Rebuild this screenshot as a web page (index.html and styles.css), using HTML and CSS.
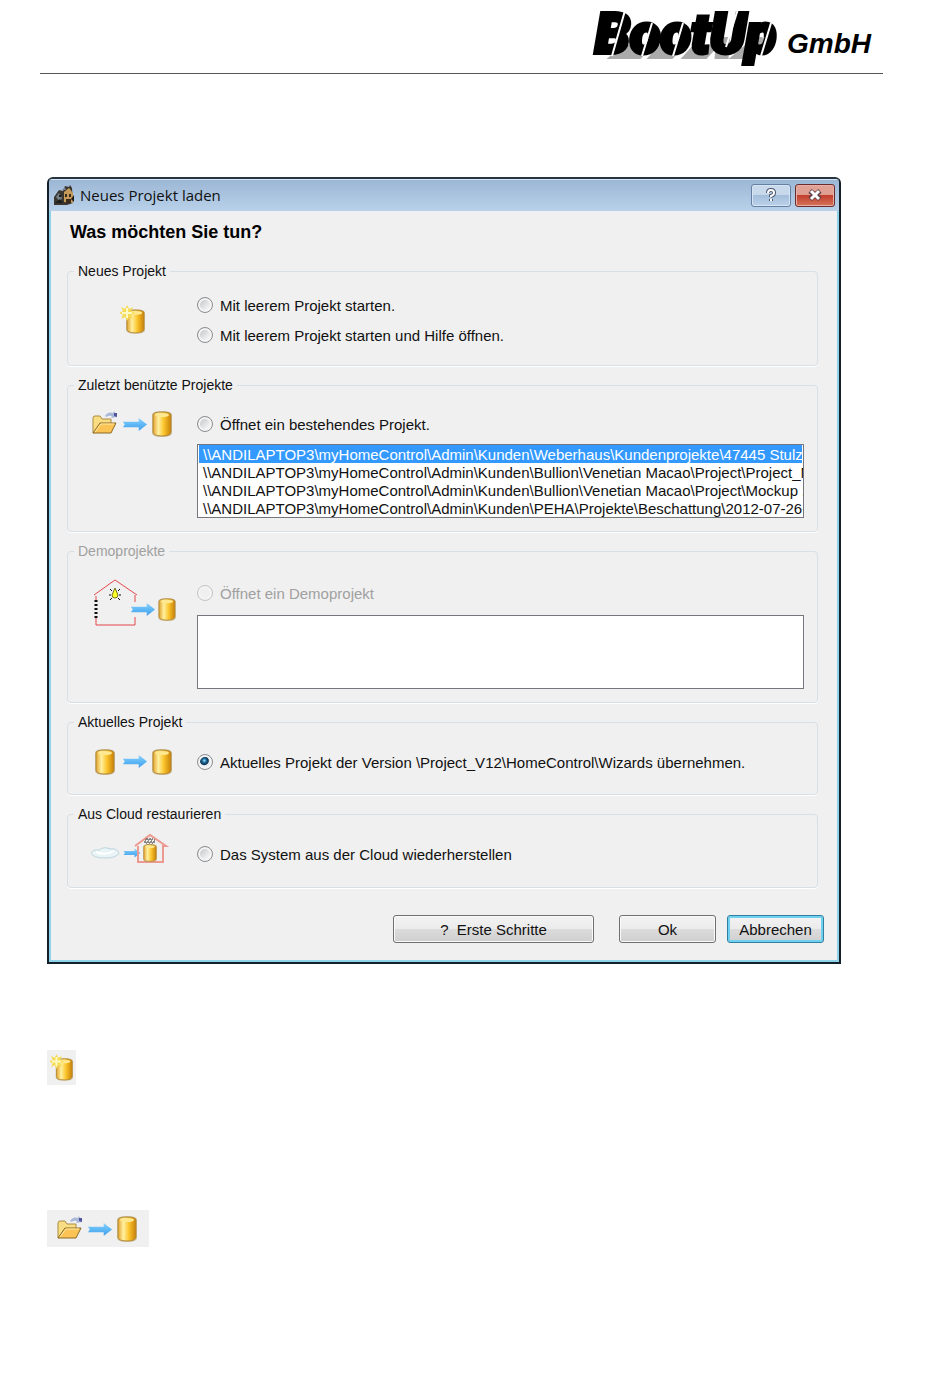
FILE: index.html
```
<!DOCTYPE html>
<html lang="de">
  <head>
    <meta charset="UTF-8" />
    <meta name="viewport" content="width=device-width, initial-scale=1.0" />
    <title>Neues Projekt laden</title>
    <link rel="stylesheet" href="styles.css">
  </head>
  <body>
    <!-- Shared icon parts -->
    <svg class="defs" aria-hidden="true">
      <defs>
        <linearGradient id="gold">
          <stop offset="0" stop-color="#e3a32c" />
          <stop offset="0.3" stop-color="#fff0a0" />
          <stop offset="0.6" stop-color="#fbc52d" />
          <stop offset="1" stop-color="#c98108" />
        </linearGradient>
        <linearGradient id="blue" x2="0" y2="1">
          <stop offset="0" stop-color="#8fd2fb" />
          <stop offset="0.5" stop-color="#5db8f5" />
          <stop offset="1" stop-color="#4a9fe8" />
        </linearGradient>
        <symbol id="barrel" viewBox="0 0 20 26">
          <path d="M0 4q0-4 10-4t10 4v18q0 4-10 4t-10-4z" fill="#b5a277" opacity=".55" />
          <path d="M1 4q0-3 9-3t9 3v17q0 4-9 4t-9-4z" fill="url(#gold)" stroke="#b58a35" />
          <ellipse cx="10" cy="4" rx="7" ry="2" fill="#ffe88f" />
        </symbol>
        <symbol id="arrow" viewBox="0 0 28 14">
          <path d="M1 4l2 3-2 3h17v4l9-7-9-7v4z" fill="url(#blue)" />
        </symbol>
        <symbol id="folder" viewBox="0 0 26 24">
          <path d="M13 5q3-5 8-3l1-2 3 6-6 1 1-2q-4-1-5 1z" fill="#a9b8d8" />
          <path d="M22 2l3 0v4l-3-1z" fill="#53549b" />
          <path d="M1 22V7q0-2 2-2h5l2 3h9v5z" fill="#f9dd83" stroke="#ad8b43" />
          <path d="M1 22l7-10h16l-5 10z" fill="#fbc254" stroke="#8c6a25" />
          <path d="M3 21l6-8h13" fill="none" stroke="#ffeaa5" />
        </symbol>
        <symbol id="new-barrel" viewBox="0 0 26 30">
          <use href="#barrel" x="6" y="4" width="19" height="25" />
          <path d="M7 0l2 4 4-2-2 4 4 2-4 2 2 4-4-2-2 4-2-4-4 2 2-4-4-2 4-2-2-4 4 2z" fill="#f6dc55" />
          <path d="M7 3v10M2 8h10" stroke="#fffac5" stroke-width="2" />
        </symbol>
        <symbol id="open-barrel" viewBox="0 0 84 30">
          <use href="#folder" x="1" y="2" width="26" height="24" />
          <use href="#arrow" x="30" y="9" width="28" height="13" />
          <use href="#barrel" x="61" y="2" width="20" height="26" />
        </symbol>
      </defs>
    </svg>

    <header class="page-header">
      <div class="logo">
        <svg class="logo-word" viewBox="0 0 194 60" role="img" aria-label="BootUp">
          <g transform="translate(16 50) skewX(-32)" aria-hidden="true">
            <path d="M0 4l8-14h30l-4 14zM40 4l4-14h26l-4 14zM74 4l4-14h26l-4 14zM108 4l-12-22h14l12 22zM122 4h20l-4-14h-8zM142-6l-14-12h14l14 14z" fill="#aaa" />
          </g>
          <text class="logo-main" x="2" y="48">BootUp</text>
          <path class="logo-cut" d="M33 2L19 51M59 18L49 51M90 18L80 51M145 4L133 42M178 18L168 51" />
        </svg>
        <span class="logo-suffix">GmbH</span>
      </div>
    </header>

    <main>
      <section class="dialog" aria-labelledby="dialogTitle">
        <div class="title-bar">
          <svg class="app-icon" viewBox="0 0 22 20" aria-hidden="true">
            <path d="M0 12l5-7 4 1 2-5 4 1 1-2 2 3 1 15-6 2H0z" fill="#3c3630" />
            <path d="M10 7l5-4 4 5v10l-9-1z" fill="#c69a58" />
            <path d="M11 9h2v3h-2zM15 9h2v3h-2zM12 14h5v4h-5z" fill="#3b2b1c" />
            <path d="M2 12l3-4 3 5-2 4zM8 5l3-3 1 3z" fill="#75818a" />
            <path d="M1 18l5-4 3 4zM5 10h2v2H5zM17 14l3-4v7z" fill="#1d1d1b" />
          </svg>
          <span class="title" id="dialogTitle">Neues Projekt laden</span>
          <button type="button" class="title-button" aria-label="Hilfe">
            <svg viewBox="0 0 16 16" width="16" height="16"><path d="M5 6q0-3 3-3t3 3q0 2-3 3v1M8 12v2" fill="none" stroke="#4b5669" stroke-width="4" /><path d="M5 6q0-3 3-3t3 3q0 2-3 3v1M8 12v2" fill="none" stroke="#fff" stroke-width="2" /></svg>
          </button>
          <button type="button" class="title-button close" aria-label="Schliessen">
            <svg viewBox="0 0 16 14" width="16" height="14"><path d="M3 3l10 8M13 3L3 11" stroke="#61404a" stroke-width="5" /><path d="M4 3l8 8M12 3l-8 8" stroke="#fff" stroke-width="3" /></svg>
          </button>
        </div>

        <form class="dialog-body">
          <h1>Was möchten Sie tun?</h1>

          <fieldset class="group new-project">
            <legend>Neues Projekt</legend>
            <svg class="icon" width="26" height="30" aria-hidden="true"><use href="#new-barrel" /></svg>
            <div class="options">
              <label class="option"><input type="radio" name="action" value="empty" />Mit leerem Projekt starten.</label>
              <label class="option"><input type="radio" name="action" value="help" />Mit leerem Projekt starten und Hilfe öffnen.</label>
            </div>
          </fieldset>

          <fieldset class="group">
            <legend>Zuletzt benützte Projekte</legend>
            <svg class="icon" width="84" height="30" aria-hidden="true"><use href="#open-barrel" /></svg>
            <div class="options">
              <label class="option"><input type="radio" name="action" value="recent" />Öffnet ein bestehendes Projekt.</label>
              <select class="project-list" size="4" aria-label="Zuletzt benützte Projekte">
                <option selected>\\ANDILAPTOP3\myHomeControl\Admin\Kunden\Weberhaus\Kundenprojekte\47445 Stulz\P</option>
                <option>\\ANDILAPTOP3\myHomeControl\Admin\Kunden\Bullion\Venetian Macao\Project\Project_Ma</option>
                <option>\\ANDILAPTOP3\myHomeControl\Admin\Kunden\Bullion\Venetian Macao\Project\Mockup 2\</option>
                <option>\\ANDILAPTOP3\myHomeControl\Admin\Kunden\PEHA\Projekte\Beschattung\2012-07-26-D</option>
              </select>
            </div>
          </fieldset>

          <fieldset class="group demo" disabled>
            <legend>Demoprojekte</legend>
            <svg class="icon" width="86" height="50" viewBox="0 0 86 50" aria-hidden="true">
              <path d="M4 17L25 2l22 15M45 17v7M45 39v8H6v-8M6 18v5" fill="none" stroke="#e4474b" />
              <path d="M6 22v18" stroke="#111" stroke-width="3" stroke-dasharray="2 2" />
              <path d="M25 10l3 7q0 3-3 3t-3-3z" fill="#ffff2a" stroke="#73731c" />
              <path d="M19 17h2M29 17h2M20 11l2 2M30 11l-2 2M20 22l2-2M30 22l-2-2" stroke="#111" />
              <use href="#arrow" x="40" y="25" width="26" height="13" />
              <use href="#barrel" x="68" y="20" width="18" height="23" />
            </svg>
            <div class="options">
              <label class="option"><input type="radio" name="action" value="demo" />Öffnet ein Demoprojekt</label>
              <select class="project-list" size="4" aria-label="Demoprojekte"></select>
            </div>
          </fieldset>

          <fieldset class="group current">
            <legend>Aktuelles Projekt</legend>
            <svg class="icon" width="84" height="30" viewBox="0 0 84 30" aria-hidden="true">
              <use href="#barrel" x="4" y="2" width="20" height="26" />
              <use href="#arrow" x="30" y="8" width="28" height="13" />
              <use href="#barrel" x="61" y="2" width="20" height="26" />
            </svg>
            <div class="options">
              <label class="option"><input type="radio" name="action" value="current" checked />Aktuelles Projekt der Version \Project_V12\HomeControl\Wizards übernehmen.</label>
            </div>
          </fieldset>

          <fieldset class="group cloud">
            <legend>Aus Cloud restaurieren</legend>
            <svg class="icon" width="84" height="36" viewBox="3 0 84 36" aria-hidden="true">
              <path d="M3 20q2-4 8-3 5-4 11-1 7-1 9 4-2 5-14 5T3 20z" fill="#e9f4f7" stroke="#bdd5dc" />
              <path d="M8 19q9 4 18-1" fill="none" stroke="#fff" stroke-width="2" />
              <use href="#arrow" x="35" y="15" width="18" height="10" />
              <path d="M47 13L62 2l16 11h-3v16H50V13" fill="none" stroke="#ec9a90" stroke-width="2" />
              <path d="M58 6h7M56 9h11M59 12h6" stroke="#28221b" stroke-dasharray="2 1" />
              <path d="M57 7h10M58 10h8" stroke="#28221b" stroke-dasharray="1 2" />
              <use href="#barrel" x="53" y="11" width="18" height="18" preserveAspectRatio="none" />
            </svg>
            <div class="options">
              <label class="option"><input type="radio" name="action" value="cloud" />Das System aus der Cloud wiederherstellen</label>
            </div>
          </fieldset>

          <div class="buttons">
            <button type="button" class="button wide">?&nbsp; Erste Schritte</button>
            <button type="button" class="button">Ok</button>
            <button type="button" class="button default">Abbrechen</button>
          </div>
        </form>
      </section>

      <div class="figure new">
        <svg width="24" height="28" aria-hidden="true"><use href="#new-barrel" /></svg>
      </div>
      <div class="figure open">
        <svg width="84" height="30" aria-hidden="true"><use href="#open-barrel" /></svg>
      </div>
    </main>
  </body>
</html>
```
FILE: styles.css
```
* {
  box-sizing: border-box;
}
body {
  margin: 0;
  padding: 0 67px 140px 40px;
  background: white;
  color: #111;
  font-family: "Liberation Sans", Arial, sans-serif;
  font-size: 15px;
}
.defs {
  display: block;
  width: 0;
  height: 0;
}

/* Page header */
.page-header {
  height: 74px;
  border-bottom: 1px solid #555;
}
.logo {
  display: flex;
  justify-content: flex-end;
  align-items: flex-start;
  padding: 5px 12px 0 0;
}
.logo-word {
  width: 194px;
  height: 60px;
  overflow: visible;
}
.logo-main {
  fill: black;
  stroke: black;
  stroke-width: 4px;
  font-family: Roboto, "Liberation Sans", sans-serif;
  font-size: 56px;
  font-weight: 900;
  font-style: italic;
}
.logo-cut {
  fill: none;
  stroke: white;
  stroke-width: 2px;
}
.logo-suffix {
  margin-top: 23px;
  color: black;
  font-size: 28px;
  font-weight: bold;
  font-style: italic;
  line-height: 32px;
}

/* Dialog */
.dialog {
  margin: 103px 42px 0 7px;
  border: 2px solid #14202a;
  border-top-color: #27343b;
  border-radius: 6px 6px 0 0;
  background: #f0f0f0;
  box-shadow: inset 0 0 0 2px #8fd3ea;
  overflow: hidden;
}
.title-bar {
  display: flex;
  align-items: center;
  gap: 4px;
  height: 32px;
  padding: 0 4px 0 5px;
  background: linear-gradient(#9bb6d4, #b9d1ea);
  box-shadow: inset 0 1px #d4e5f5;
}
.app-icon {
  width: 22px;
  height: 20px;
}
.title {
  flex: 1;
  font-family: "Open Sans", "Noto Sans", sans-serif;
  font-size: 15px;
}
.title-button {
  display: flex;
  align-items: center;
  justify-content: center;
  width: 40px;
  height: 23px;
  padding: 0;
  border: 1px solid #6580a3;
  border-radius: 3px;
  background: linear-gradient(#c8d9ec 45%, #a4bedb 50%, #bbd2ea);
  box-shadow: inset 0 0 0 1px #d6e5f4;
}
.title-button.close {
  border-color: #6b2b2c;
  background: linear-gradient(#e0a094 45%, #c2402d 50%, #d4735b);
  box-shadow: inset 0 0 0 1px #e7afa5;
}
.dialog-body {
  padding: 10px 21px 19px 18px;
}
h1 {
  margin: 0 0 19px 3px;
  font-size: 18px;
  line-height: 22px;
  color: black;
}

/* Option groups */
.group {
  display: grid;
  grid-template-columns: 129px 1fr;
  min-width: 0;
  margin: 0 0 10px;
  padding: 15px 13px 13px 0;
  border: 1px solid #d8dfe5;
  border-radius: 4px;
  box-shadow: 0 1px white;
}
.group legend {
  margin-left: 6px;
  padding: 0 4px;
  font-size: 14px;
  line-height: 18px;
}
.icon {
  justify-self: center;
}
.options {
  min-width: 0;
}
.new-project {
  align-items: center;
  padding-top: 10px;
  padding-bottom: 15px;
}
.demo {
  padding-top: 18px;
  color: #a0a0a0;
}
.current {
  padding-top: 16px;
  padding-bottom: 17px;
}
.cloud {
  align-items: end;
  padding-top: 10px;
  padding-bottom: 18px;
}
.option {
  display: flex;
  align-items: center;
  gap: 7px;
  height: 30px;
}
.option input {
  flex: none;
  appearance: none;
  width: 16px;
  height: 16px;
  margin: 0;
  border: 1px solid #8b8d90;
  border-radius: 50%;
  background: linear-gradient(135deg, #b9bcc0, #f8f8f8 80%);
  box-shadow: inset 0 0 0 2px #f4f4f4;
}
.option input:checked {
  background: radial-gradient(circle at 45% 40%, #9fe0f8 0, #1c6d9c 2px, #0c3150 4px, #e4eaee 5px);
}
.option input:disabled {
  border-color: #c4c4c4;
  background: #f0f0f0;
}
.project-list {
  display: block;
  width: 100%;
  height: 74px;
  margin-top: 5px;
  padding: 0 1px;
  border: 1px solid #74777d;
  border-radius: 0;
  background: white;
  color: #111;
  font: inherit;
  overflow: hidden;
}
.demo .project-list {
  margin-top: 7px;
  opacity: 1;
}
.project-list option {
  min-height: 0;
  padding: 1px 4px 0;
}
.project-list option:checked {
  background: #3399ff linear-gradient(#3399ff, #3399ff);
  color: white;
}

/* Buttons */
.buttons {
  display: flex;
  justify-content: flex-end;
  gap: 11px;
  margin: 27px -6px 0 0;
}
.button {
  width: 97px;
  height: 28px;
  padding: 0;
  border: 1px solid #707070;
  border-radius: 3px;
  background: linear-gradient(#f3f3f3, #ebebeb 50%, #dcdcdc 50%, #cfcfcf);
  box-shadow: inset 0 0 0 1px #fafafa;
  color: #111;
  font: inherit;
}
.button.wide {
  width: 201px;
  margin-right: 14px;
}
.button.default {
  border-color: #2f7f9f;
  box-shadow: inset 0 0 0 2px #6fd0f0;
}

/* Icon figures below the dialog */
.figure {
  display: flex;
  align-items: center;
  justify-content: center;
  margin-left: 7px;
  background: #f0f0f0;
}
.figure.new {
  width: 29px;
  height: 35px;
  margin-top: 86px;
}
.figure.open {
  width: 102px;
  height: 37px;
  margin-top: 125px;
}
```
